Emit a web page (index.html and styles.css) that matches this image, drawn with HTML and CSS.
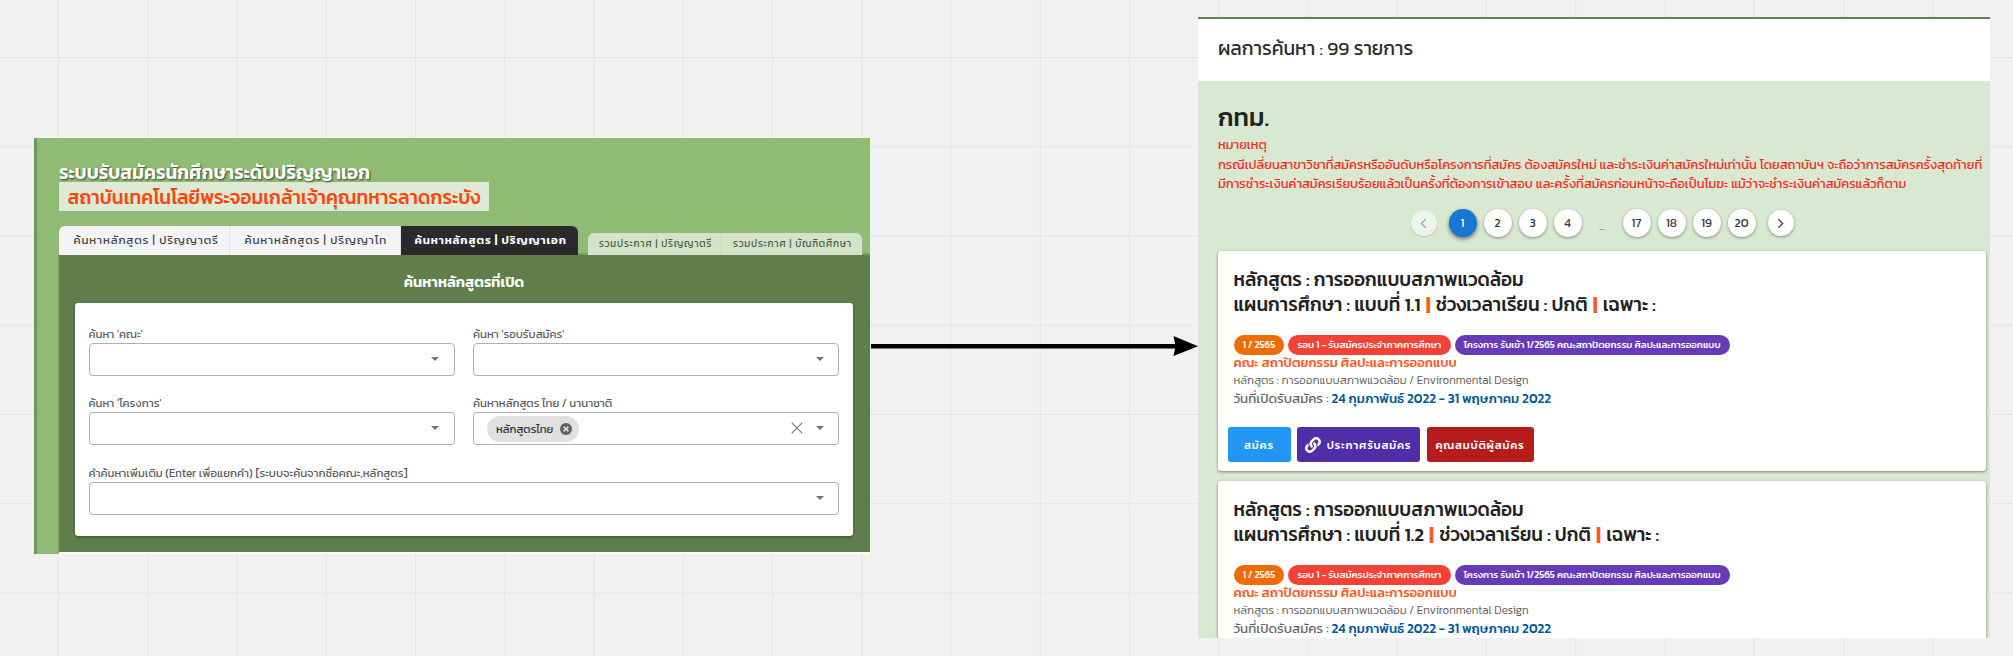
FILE: index.html
```html
<!DOCTYPE html>
<html lang="th">
<head>
<meta charset="utf-8">
<title>ระบบรับสมัครนักศึกษาระดับปริญญาเอก</title>
<link rel="stylesheet" href="styles.css">
</head>
<body>
<main class="board">
  <section class="panel search">
    <header class="search-head">
      <h1 class="title">ระบบรับสมัครนักศึกษาระดับปริญญาเอก</h1>
      <p class="institute">สถาบันเทคโนโลยีพระจอมเกล้าเจ้าคุณทหารลาดกระบัง</p>
    </header>
    <nav class="tabs">
      <div class="tab-group">
        <a class="tab">ค้นหาหลักสูตร | ปริญญาตรี</a>
        <a class="tab">ค้นหาหลักสูตร | ปริญญาโท</a>
        <a class="tab active">ค้นหาหลักสูตร | ปริญญาเอก</a>
      </div>
      <div class="tab-group small">
        <a class="tab">รวมประกาศ | ปริญญาตรี</a>
        <a class="tab">รวมประกาศ | บัณฑิตศึกษา</a>
      </div>
    </nav>
    <div class="search-body">
      <h2 class="search-title">ค้นหาหลักสูตรที่เปิด</h2>
      <form class="form-card">
        <div class="field"><label>ค้นหา 'คณะ'</label><div class="select"><i class="caret"></i></div></div>
        <div class="field"><label>ค้นหา 'รอบรับสมัคร'</label><div class="select"><i class="caret"></i></div></div>
        <div class="field"><label>ค้นหา 'โครงการ'</label><div class="select"><i class="caret"></i></div></div>
        <div class="field"><label>ค้นหาหลักสูตร ไทย / นานาชาติ</label>
          <div class="select">
            <span class="chip">หลักสูตรไทย
              <svg class="chip-x" viewBox="0 0 12 12"><circle cx="6" cy="6" r="6" fill="#616161"/><path d="M3.6 3.6l4.8 4.8M8.4 3.6L3.6 8.4" stroke="#e0e0e0" stroke-width="1.5"/></svg>
            </span>
            <svg class="clear" viewBox="0 0 12 12"><path d="M.7.7l10.6 10.6M11.3.7L.7 11.3" stroke="#757575" stroke-width="1.1"/></svg>
            <i class="caret"></i>
          </div>
        </div>
        <div class="field wide"><label>คำค้นหาเพิ่มเติม (Enter เพื่อแยกคำ) [ระบบจะค้นจากชื่อคณะ,หลักสูตร]</label><div class="select"><i class="caret"></i></div></div>
      </form>
    </div>
  </section>

  <svg class="arrow" viewBox="0 0 328 22"><path d="M0 11.3H306" stroke="#000" stroke-width="4.6"/><path d="M302.5 1L327 11.2L302.5 21L304.5 11z"/></svg>

  <section class="panel results">
    <header class="results-head">ผลการค้นหา : 99 รายการ</header>
    <div class="results-body">
      <h2 class="city">กทม.</h2>
      <div class="note">
        <p>หมายเหตุ</p>
        <p>กรณีเปลี่ยนสาขาวิชาที่สมัครหรืออันดับหรือโครงการที่สมัคร ต้องสมัครใหม่ และชำระเงินค่าสมัครใหม่เท่านั้น โดยสถาบันฯ จะถือว่าการสมัครครั้งสุดท้ายที่</p>
        <p>มีการชำระเงินค่าสมัครเรียบร้อยแล้วเป็นครั้งที่ต้องการเข้าสอบ และครั้งที่สมัครก่อนหน้าจะถือเป็นโมฆะ แม้ว่าจะชำระเงินค่าสมัครแล้วก็ตาม</p>
      </div>
      <nav class="pager">
        <a class="step off"><svg viewBox="0 0 12 12"><path d="M8 2L4 6l4 4"/></svg></a>
        <a class="page current">1</a><a class="page">2</a><a class="page">3</a><a class="page">4</a>
        <span class="dots">...</span>
        <a class="page">17</a><a class="page">18</a><a class="page">19</a><a class="page">20</a>
        <a class="step"><svg viewBox="0 0 12 12"><path d="M4 2l4 4-4 4"/></svg></a>
      </nav>
      <article class="course">
        <h3>หลักสูตร : การออกแบบสภาพแวดล้อม</h3>
        <h3>แผนการศึกษา : แบบที่ 1.1 <b>|</b> ช่วงเวลาเรียน : ปกติ <b>|</b> เฉพาะ :</h3>
        <div class="tags"><span class="tag orange">1 / 2565</span><span class="tag red">รอบ 1 - รับสมัครประจำภาคการศึกษา</span><span class="tag purple">โครงการ รับเข้า 1/2565 คณะสถาปัตยกรรม ศิลปะและการออกแบบ</span></div>
        <p class="faculty">คณะ สถาปัตยกรรม ศิลปะและการออกแบบ</p>
        <p class="program">หลักสูตร : การออกแบบสภาพแวดล้อม / Environmental Design</p>
        <p class="dates">วันที่เปิดรับสมัคร : <strong>24 กุมภาพันธ์ 2022 - 31 พฤษภาคม 2022</strong></p>
        <div class="actions">
          <button class="btn blue">สมัคร</button>
          <button class="btn violet"><svg viewBox="0 0 512 512"><path fill="currentColor" d="M326.6 185.4c59.7 59.8 58.9 155.700.400 214.600-.1.100-.2.300-.400.400l-67.200 67.200c-59.300 59.300-155.700 59.300-215 0-59.300-59.300-59.300-155.700 0-215l37.100-37.100c9.800-9.800 26.800-3.300 27.300 10.600.6 17.700 3.800 35.500 9.700 52.700 2 5.800.6 12.300-3.800 16.600l-13.100 13.100c-28 28-28.900 73.700-1.200 102 28 28.600 74.100 28.700 102.300.500l67.200-67.200c28.200-28.200 28.100-73.800 0-101.800-3.700-3.700-7.400-6.600-10.300-8.600a16 16 0 0 1-6.900-12.600c-.4-10.600 3.300-21.500 11.700-29.800l21.100-21.100c5.500-5.500 14.200-6.200 20.600-1.700a152.500 152.500 0 0 1 20.500 17.200zM467.500 44.400c-59.300-59.300-155.700-59.300-215 0l-67.200 67.200c-.1.100-.3.300-.4.400-58.600 58.900-59.400 154.800.4 214.600a152.500 152.500 0 0 0 20.500 17.200c6.400 4.500 15.100 3.800 20.600-1.700l21.100-21.100c8.400-8.400 12.100-19.200 11.700-29.800a16 16 0 0 0-6.900-12.600c-2.900-2-6.600-4.900-10.300-8.600-28.100-28.100-28.200-73.600 0-101.800l67.200-67.200c28.200-28.200 74.300-28.100 102.300.500 27.800 28.300 26.900 73.900-1.200 102l-13.100 13.100c-4.400 4.400-5.800 10.800-3.800 16.600 5.900 17.200 9 35 9.700 52.700.5 13.900 17.500 20.400 27.300 10.600l37.100-37.100c59.300-59.300 59.300-155.700 0-215z"/></svg>ประกาศรับสมัคร</button>
          <button class="btn crimson">คุณสมบัติผู้สมัคร</button>
        </div>
      </article>
      <article class="course">
        <h3>หลักสูตร : การออกแบบสภาพแวดล้อม</h3>
        <h3>แผนการศึกษา : แบบที่ 1.2 <b>|</b> ช่วงเวลาเรียน : ปกติ <b>|</b> เฉพาะ :</h3>
        <div class="tags"><span class="tag orange">1 / 2565</span><span class="tag red">รอบ 1 - รับสมัครประจำภาคการศึกษา</span><span class="tag purple">โครงการ รับเข้า 1/2565 คณะสถาปัตยกรรม ศิลปะและการออกแบบ</span></div>
        <p class="faculty">คณะ สถาปัตยกรรม ศิลปะและการออกแบบ</p>
        <p class="program">หลักสูตร : การออกแบบสภาพแวดล้อม / Environmental Design</p>
        <p class="dates">วันที่เปิดรับสมัคร : <strong>24 กุมภาพันธ์ 2022 - 31 พฤษภาคม 2022</strong></p>
      </article>
    </div>
  </section>
</main>
</body>
</html>
```
FILE: styles.css
```css
* { box-sizing: border-box; }
body, h1, h2, h3, p { margin: 0; }
body { font-family: Kanit, "Noto Sans Thai", sans-serif; font-weight: 400; }

/* Canvas with its grid */
.board {
  position: relative;
  width: 2013px;
  height: 656px;
  overflow: hidden;
  background-color: #f1f1f1;
  background-image:
    linear-gradient(90deg, #e5e5e5 1.2px, transparent 1.2px),
    linear-gradient(#e5e5e5 1.2px, transparent 1.2px);
  background-size: 89.25px 89.25px;
  background-position: 58px 57px;
  white-space: nowrap;
}
.panel { position: absolute; overflow: hidden; }
.arrow { position: absolute; left: 871px; top: 335px; width: 328px; height: 22px; }

/* Search panel */
.search {
  left: 34px; top: 138px; width: 836px; height: 416px;
  padding-left: 22px;
  border-left: 3px solid #6f985c;
  background: #8fbb74;
  display: flex;
  flex-direction: column;
}
.search-head { height: 88px; padding-top: 19px; }
.title {
  height: 25px; line-height: 30px;
  font-size: 18.9px; font-weight: 600; color: #fff;
  text-shadow: 1px 1px 2px rgba(0, 0, 0, .65);
}
.institute {
  width: 430px; height: 29px; padding-left: 8.5px; line-height: 31px;
  background: #deead5; color: #ff4509;
  font-size: 19.1px; font-weight: 500;
}
.tabs { display: flex; align-items: flex-end; gap: 10px; height: 29px; position: relative; }
.tab-group {
  display: flex; height: 29px; overflow: hidden;
  border-radius: 6px 6px 0 0; background: #f4f4f4;
}
.tab {
  width: 171px; padding-left: 14.5px; line-height: 29px;
  font-size: 11.5px; letter-spacing: .85px; color: #444;
  border-right: 1px solid #e2e2e2;
}
.tab.active { width: 177px; padding-left: 13.5px; background: #2a2a2a; color: #fff; font-weight: 600; border: 0; }
.small { height: 22px; background: #d2e3c7; }
.small .tab { width: 134px; padding-left: 11px; line-height: 22px; font-size: 9.8px; letter-spacing: .77px; color: #4e5a47; border-color: #c8d9bd; }
.small .tab + .tab { width: 140px; border: 0; }
.search-body {
  height: 299px; padding: 0 17px 0 16px;
  background: #607d4c; border-bottom: 2px solid #fff;
  box-shadow: 0 -1px 2px rgba(0, 0, 0, .3);
}
.search-title {
  height: 48px; line-height: 55px; text-align: center;
  font-size: 14.7px; font-weight: 600; color: #fff;
}
.form-card {
  height: 233px; padding: 23px 14px 0 13.5px;
  display: grid; grid-template-columns: 366px 366px; column-gap: 18.5px;
  grid-template-rows: 69px 70px 56px;
  background: #fff; border-radius: 3px; box-shadow: 0 1px 3px rgba(0, 0, 0, .4);
}
.wide { grid-column: 1 / 3; }
.field label { display: block; height: 17px; line-height: 17px; font-size: 11.4px; color: #5c5c5c; }
.select {
  height: 33px; padding: 0 14.5px 0 13px;
  display: flex; align-items: center;
  border: 1px solid #b0b0b0; border-radius: 4px;
}
.caret {
  margin: 0 0 2px auto;
  border: 4px solid transparent; border-top: 4px solid #757575; border-bottom: 0;
}
.chip {
  display: flex; align-items: center; gap: 6.5px;
  height: 26px; padding: 0 7.5px 0 9px; border-radius: 13px;
  background: #e0e0e0; color: #333; font-size: 11.3px;
}
.chip-x { width: 12px; height: 12px; }
.clear { width: 12px; height: 12px; margin: 0 13px 2px auto; }
.clear + .caret { margin-left: 0; }

/* Results panel */
.results {
  left: 1198px; top: 17px; width: 792px; height: 621px;
  border-top: 2px solid #64804f;
  background: #d9e8d1;
}
.results-head { height: 62px; padding-left: 20px; line-height: 60px; background: #fff; font-size: 19.2px; color: #2c2c2c; }
.results-body { padding: 16px 4px 0 20px; }
.city { height: 39px; line-height: 40px; font-size: 25px; font-weight: 500; color: #222; }
.note { color: #f8281c; font-size: 12.85px; }
.note p { height: 19px; line-height: 17px; }
.note p + p { line-height: 19px; }
.pager { height: 58px; display: flex; align-items: center; justify-content: center; gap: 7px; padding-top: 2px; }
.pager a {
  display: flex; align-items: center; justify-content: center;
  height: 28px; border-radius: 50%; background: #fff;
  box-shadow: 0 1px 3px rgba(0, 0, 0, .4); color: #333;
}
.page { width: 28px; font-size: 12px; }
.pager .current { background: #1976d2; color: #fff; box-shadow: 0 2px 4px rgba(0, 0, 0, .5); }
.pager .step { width: 26px; height: 26px; margin: 0 5px; }
.pager .off { background: #eff4ec; box-shadow: 0 1px 2px rgba(0, 0, 0, .15); }
.step svg { width: 13px; height: 13px; fill: none; stroke: #555; stroke-width: 1.4; }
.off svg { stroke: #a4a8a2; }
.dots { width: 27px; text-align: center; font-size: 10px; color: #666; padding-top: 6px; }
.course {
  height: 220px; margin-bottom: 10px; padding: 16px 15.5px 0;
  background: #fff; border-radius: 3px; box-shadow: 0 1px 3px rgba(0, 0, 0, .45);
}
.course h3 { height: 25px; line-height: 25px; font-size: 18.9px; font-weight: 500; color: #222; }
.course h3 b { margin: 0 1.2px; color: #ff5722; font-weight: 700; }
.tags { display: flex; gap: 4px; padding-top: 17.5px; height: 37px; }
.tag { height: 20px; padding: 0 9.2px; line-height: 20px; border-radius: 10px; color: #fff; font-size: 9.72px; font-weight: 500; }
.orange { background: #ef6c00; }
.red { background: #f44336; }
.purple { background: #673ab7; }
.faculty { height: 17px; line-height: 17px; font-size: 13.1px; font-weight: 500; color: #ff5722; }
.program { height: 18px; line-height: 18px; font-size: 11.55px; font-weight: 300; color: #5c5c5c; }
.dates { height: 18px; line-height: 18px; font-size: 13.3px; color: #666; }
.dates strong { font-size: 13.2px; font-weight: 500; color: #01579b; }
.actions { display: flex; padding-top: 20px; margin-left: -6px; }
.btn {
  display: flex; align-items: center; justify-content: center;
  height: 35px; padding: 0; border: 0; border-radius: 3px;
  color: #fff; font: 500 11.3px Kanit, sans-serif; letter-spacing: .75px;
}
.btn svg { width: 16px; height: 16px; margin-right: 6px; }
.blue { width: 63px; background: #2196f3; }
.violet { width: 123px; margin: 0 7px 0 6px; background: #512da8; }
.crimson { width: 107px; background: #b71c1c; }
```
